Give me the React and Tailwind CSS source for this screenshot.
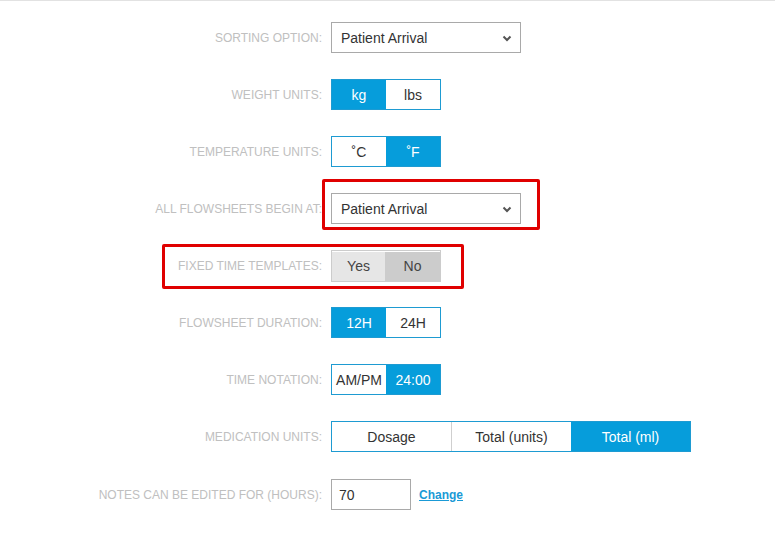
import React from "react";

const font = { fontFamily: '"Liberation Sans", Arial, sans-serif' };

function Row({ label, children }) {
  return (
    <div className="flex items-center h-[31px]">
      <div className="w-[323px] pr-px text-right text-[12px] uppercase text-[#c0c0c0] shrink-0">
        {label}
      </div>
      <div className="ml-[8px] flex items-center">{children}</div>
    </div>
  );
}

function Select({ value }) {
  return (
    <div className="w-[190px] h-[31px] border border-[#a9a9a9] flex items-center justify-between pl-[9px] pr-[8px] pt-px text-[14px] text-[#333]">
      <span>{value}</span>
      <svg width="10" height="7" viewBox="0 0 10 7">
        <path d="M1.5 1.5 L5 5 L8.5 1.5" fill="none" stroke="#555" strokeWidth="2" />
      </svg>
    </div>
  );
}

function Toggle({ options, active, width = 55 }) {
  return (
    <div className="flex h-[31px] border border-[#1e9bd2]">
      {options.map((o, i) => (
        <div
          key={o}
          style={{ width: width - (i === 0 ? 1 : i === options.length - 1 ? 1 : 0) }}
          className={
            "flex items-center justify-center pt-px text-[14px] " +
            (i === active ? "bg-[#069ddb] text-white" : "bg-white text-[#333]") +
            (i > 0 && i !== active && i - 1 !== active ? " border-l border-[#cfcfcf]" : "")
          }
        >
          {o}
        </div>
      ))}
    </div>
  );
}

export default function App() {
  return (
    <div style={font} className="relative w-[775px] h-[554px] bg-white border-t border-[#e2e2e2] overflow-hidden">
      <div className="flex flex-col gap-[26px] pt-[21px]">
        <Row label="Sorting option:">
          <Select value="Patient Arrival" />
        </Row>
        <Row label="Weight units:">
          <Toggle options={["kg", "lbs"]} active={0} />
        </Row>
        <Row label="Temperature units:">
          <Toggle options={["˚C", "˚F"]} active={1} />
        </Row>
        <Row label="All flowsheets begin at:">
          <Select value="Patient Arrival" />
        </Row>
        <Row label="Fixed time templates:">
          <div className="flex h-[32px] border border-[#cccccc] pt-px text-[14px] text-[#444]">
            <div className="w-[53px] flex items-center justify-center bg-[#e6e6e6]">Yes</div>
            <div className="w-[55px] flex items-center justify-center bg-[#cccccc]">No</div>
          </div>
        </Row>
        <Row label="Flowsheet duration:">
          <Toggle options={["12H", "24H"]} active={0} />
        </Row>
        <Row label="Time notation:">
          <Toggle options={["AM/PM", "24:00"]} active={1} />
        </Row>
        <Row label="Medication units:">
          <Toggle options={["Dosage", "Total (units)", "Total (ml)"]} active={2} width={120} />
        </Row>
        <div className="mt-px">
          <Row label="Notes can be edited for (hours):">
            <div className="w-[80px] h-[31px] border border-[#a9a9a9] flex items-center pl-[7px] pt-px text-[14px] text-[#333]">
              70
            </div>
            <a className="ml-[8px] text-[12px] font-bold underline text-[#1a9ad6]">Change</a>
          </Row>
        </div>
      </div>

      <div className="absolute left-[322px] top-[178px] w-[218px] h-[51px] border-[3px] border-[#e00000] rounded-[2px]" />
      <div className="absolute left-[162px] top-[243px] w-[302px] h-[45px] border-[3px] border-[#e00000] rounded-[2px]" />
    </div>
  );
}
